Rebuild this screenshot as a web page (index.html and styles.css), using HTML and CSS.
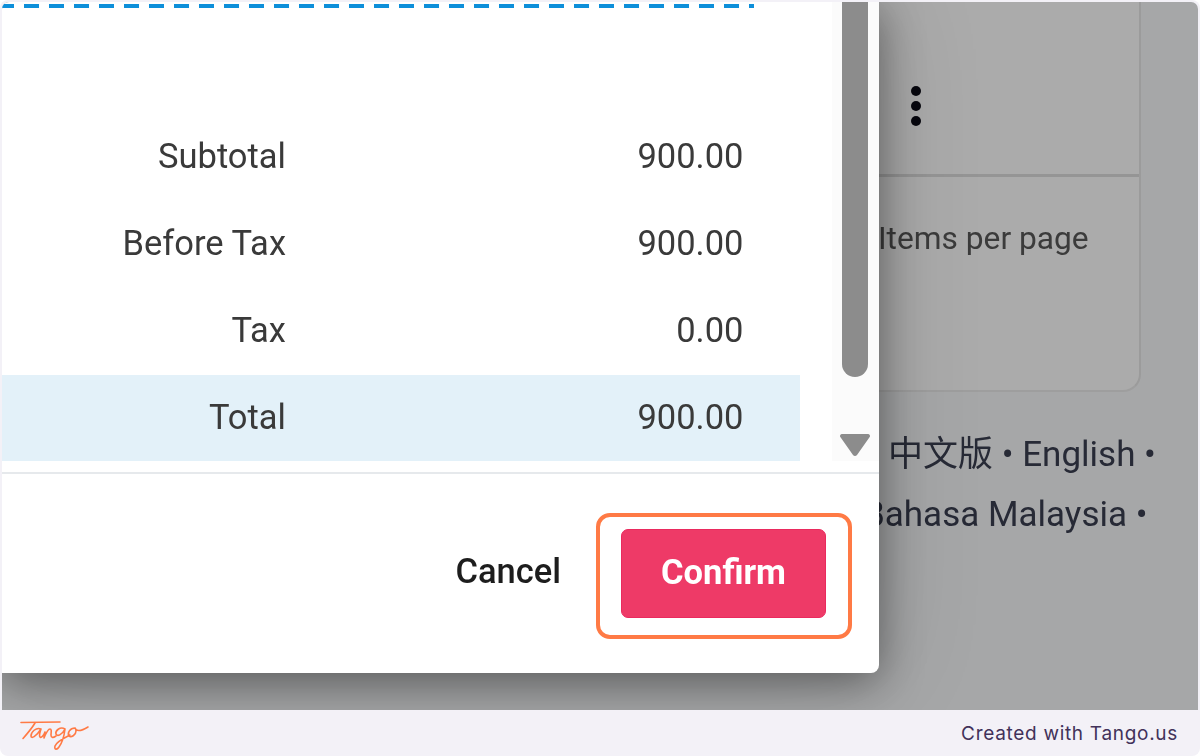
FILE: index.html
```html
<!DOCTYPE html>
<html lang="en">
<head>
<meta charset="utf-8">
<title>Confirm</title>
<link rel="stylesheet" href="styles.css">
</head>
<body>
<div class="shot">
  <div class="stage">
    <div class="backdrop">
      <div class="card">
        <div class="card-top"><span class="kebab"><i></i><i></i><i></i></span></div>
        <div class="card-bottom">Items per page</div>
      </div>
      <div class="langs">
        <p>中文版 • English •</p>
        <p class="malay">Bahasa Malaysia •</p>
      </div>
    </div>
    <div class="modal">
      <div class="modal-body">
        <div class="content">
          <div class="dashed"></div>
          <div class="totals">
            <div class="row"><span class="label">Subtotal</span><span class="value">900.00</span></div>
            <div class="row"><span class="label">Before Tax</span><span class="value">900.00</span></div>
            <div class="row"><span class="label">Tax</span><span class="value">0.00</span></div>
            <div class="row total"><span class="label">Total</span><span class="value">900.00</span></div>
          </div>
        </div>
        <div class="scrollbar">
          <div class="thumb"></div>
          <svg class="arrow" width="32" height="24" viewBox="0 0 32 24"><path d="M3 1h26a2 2 0 0 1 1.500 3.300L18 22a2.600 2.600 0 0 1-4 0L1.500 4.300A2 2 0 0 1 3 1z"/></svg>
        </div>
      </div>
      <div class="modal-foot">
        <button class="cancel">Cancel</button>
        <div class="focus-ring"><button class="confirm">Confirm</button></div>
      </div>
    </div>
  </div>
  <footer class="brand">
    <svg class="logo" width="70" height="34" viewBox="0 0 70 34" role="img" aria-label="Tango"><g fill="none" stroke="#ff7a45" stroke-width="1.600" stroke-linecap="round" stroke-linejoin="round"><path d="M1 3.500 40 3"/><path d="M15 4C12 9 7 15 3 19.500"/><path d="M21 10C16 8 11 13 11 17c0 3 5 1 10-7-1 3-2 7-1 8 1 1.500 4-2 5-5l-1 6c2-5 4-9 6-9s1 4 1 6c0 3 2 3 5 1"/><path d="M45 10c-5-3-10 2-9 5 1 3 6 1 9-5-1 8-3 14-6 18-2 3-5 3-4-1 1-3 7-7 15-11"/><path d="M55 9c-5 0-8 5-6 8 2 2 7-1 7-5 0-2-1-3-1-3 1 3 5 4 13-1"/></g></svg>
    <span class="credit">Created with Tango.us</span>
  </footer>
</div>
</body>
</html>
```
FILE: styles.css
```css
* { box-sizing: border-box; }
html, body { margin: 0; padding: 0; background: #fff; }
body { width: 1200px; height: 756px; overflow: hidden; font-family: Roboto, "Noto Sans CJK SC", sans-serif; }
.shot { width: 1200px; height: 756px; background: #f3f1f7; border-radius: 8px; padding-top: 2px; display: flex; flex-direction: column; }
.stage { position: relative; height: 708px; margin: 0 2px; border-radius: 7px 7px 0 0; overflow: hidden; background: #a6a7a8; }
.backdrop { display: flex; flex-direction: column; align-items: flex-end; padding-right: 57px; height: 100%; filter: blur(.45px); }
.card { width: 400px; height: 390px; background: #ababab; border-right: 2px solid #9b9b9b; border-bottom: 2px solid #9e9e9e; border-radius: 0 0 18px 0; display: flex; flex-direction: column; }
.card-top { height: 175px; border-bottom: 3px solid #959595; padding-left: 170px; display: flex; align-items: center; }
.kebab { display: flex; flex-direction: column; gap: 5px; margin-top: 36px; }
.kebab i { display: block; width: 10px; height: 10px; border-radius: 50%; background: #08080f; }
.card-bottom { padding: 44px 0 0 137px; font-size: 31.700px; line-height: 36px; color: #3b3b3b; }
.langs { width: 317px; align-self: flex-end; margin-right: -57px; padding-top: 33px; padding-left: 7px; font-size: 35px; line-height: 60px; color: #272a36; white-space: nowrap; }
.langs p { margin: 0; }
.langs .malay { margin-left: -25px; }
.modal { position: absolute; left: 0; top: 0; width: 877px; height: 671px; background: #fff; border-radius: 0 0 8px 0; box-shadow: 0 8px 44px rgba(0, 0, 0, .42), 0 0 110px rgba(0, 0, 0, .14); display: flex; flex-direction: column; }
.modal-body { flex: 0 0 472px; display: flex; border-bottom: 2px solid #e6e9ec; }
.content { width: 830px; padding-top: 2px; filter: blur(.45px); }
.dashed { width: 752px; height: 4px; background: repeating-linear-gradient(90deg, #0d8fda 0 15px, transparent 15px 25px); background-position: -3px 0; }
.totals { margin-top: 105px; display: flex; flex-direction: column; width: 798px; }
.row { height: 87px; padding-bottom: 2px; display: flex; align-items: center; font-size: 34.500px; color: #3a3a3a; }
.label { width: 284px; text-align: right; }
.value { width: 457.500px; text-align: right; }
.total { background: #e3f1f9; height: 86px; margin-top: 1px; }
.scrollbar { flex: 1; background: #fbfbfb; display: flex; flex-direction: column; align-items: center; margin-bottom: 11px; padding-right: 2px; }
.thumb { width: 26px; height: 375px; background: #8c8c8c; border-radius: 0 0 13px 13px; }
.arrow { margin-top: 56px; fill: #8c8c8c; }
.modal-foot { flex: 1; display: flex; justify-content: flex-end; align-items: flex-start; padding: 39px 27px 0 0; }
.cancel { background: none; border: 0; padding: 0; margin: 36px 35px 0 0; font: 500 34.500px/44px Roboto, sans-serif; color: #1d1d1d; filter: blur(.45px); }
.focus-ring { width: 256px; height: 126px; border: 4px solid #ff7a45; border-radius: 14px; padding: 12px 0 0 21px; }
.confirm { width: 205px; height: 89px; background: #ee3a67; border: 1px solid #ea2a5e; border-radius: 7px; color: #fff; font: 700 34.500px/44px Roboto, sans-serif; padding: 0 0 4px; filter: blur(.45px); }
.brand { flex: 1; display: flex; align-items: center; justify-content: space-between; padding: 0 22px 0 20px; }
.logo { display: block; margin-top: 5px; }
.credit { font-family: Inter, sans-serif; font-size: 19px; letter-spacing: .7px; color: #42325a; }
```
